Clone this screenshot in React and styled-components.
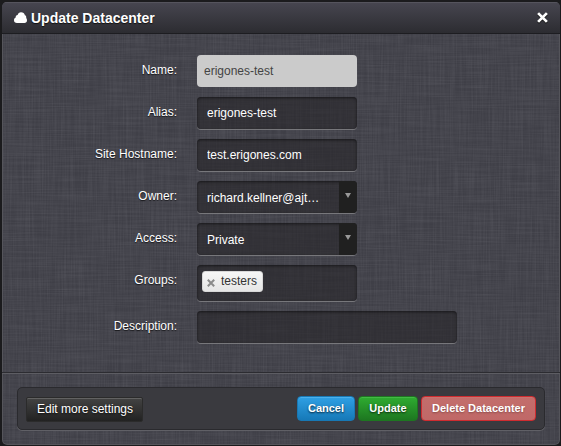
import React from 'react';
import styled, { createGlobalStyle, css } from 'styled-components';

const weave = (frequency, seed) =>
  `url("data:image/svg+xml,${encodeURIComponent(
    `<svg xmlns='http://www.w3.org/2000/svg' width='560' height='446'><filter id='f' x='0' y='0' width='100%' height='100%' color-interpolation-filters='sRGB'><feTurbulence type='fractalNoise' baseFrequency='${frequency}' numOctaves='2' seed='${seed}'/><feColorMatrix values='0 0 0 0 0.55  0 0 0 0 0.55  0 0 0 0 0.58  0.24 0 0 0 -0.08'/></filter><rect width='560' height='446' filter='url(#f)'/></svg>`
  )}")`;

const GlobalStyle = createGlobalStyle`
  * { box-sizing: border-box; }
  body {
    margin: 0;
    overflow: hidden;
    background: #1b1b1d;
    font-family: "Liberation Sans", Arial, sans-serif;
    font-size: 12px;
    color: #fff;
  }
  button, input { font-family: inherit; }
`;

const Page = styled.div`
  height: 446px;
  padding: 2px 1px 1px 2px;
`;

const Dialog = styled.section`
  display: flex;
  flex-direction: column;
  height: 443px;
  border-radius: 5px;
  overflow: hidden;
  background: ${weave('0.7 0.02', 3)}, ${weave('0.02 0.7', 8)}, #3f3f47;
  box-shadow: inset 1px 0 #55555b, inset -1px 0 #55555b, inset 0 -1px #55555b;
`;

const Header = styled.header`
  display: flex;
  align-items: center;
  height: 32px;
  padding: 0 12px 0 12px;
  background: linear-gradient(#474650, #2c2c31);
  border-bottom: 1px solid #1d1d21;
  box-shadow: inset 0 1px #55545d;
  flex: none;
`;

const Title = styled.h1`
  flex: 1;
  margin: 0 0 0 4px;
  font-size: 14px;
  line-height: 20px;
  font-weight: bold;
  text-shadow: 0 1px 1px #111;
`;

const CloseButton = styled.button`
  display: flex;
  margin-top: -1px;
  padding: 0;
  border: 0;
  background: none;
  filter: drop-shadow(0 1px 0 #111);
`;

const Form = styled.form`
  display: flex;
  flex-direction: column;
  gap: 10px;
  height: 338px;
  padding: 21px 0 0;
  flex: none;
`;

const Row = styled.div`
  display: grid;
  grid-template-columns: 175px auto;
  column-gap: 20px;
  justify-content: start;
`;

const Label = styled.label`
  padding-top: 7px;
  line-height: 16px;
  text-align: right;
  text-shadow: 0 1px 1px #17171a;
`;

const field = css`
  width: ${p => p.$width || 160}px;
  height: ${p => p.$height || 32}px;
  border: 0;
  border-radius: 4px;
  background: rgba(36, 35, 39, 0.55);
  box-shadow: inset 0 1px 3px rgba(0, 0, 0, 0.55), 0 1px 0 #77777b;
  color: #fff;
  font-size: 12px;
`;

const TextInput = styled.input`
  ${field}
  display: block;
  padding: 0 10px;
  outline: 0;
  &:disabled {
    padding: 0 7px;
    background: #cbcbcb;
    box-shadow: none;
    color: #444;
  }
`;

const Select = styled.div`
  ${field}
  display: flex;
  overflow: hidden;
`;

const SelectValue = styled.span`
  flex: 1;
  padding-left: 10px;
  line-height: 34px;
  white-space: nowrap;
`;

const SelectArrow = styled.span`
  display: flex;
  justify-content: center;
  width: 18px;
  padding-top: 12px;
  background: #202020;
`;

const TagField = styled.div`
  ${field}
  padding: 6px 5px;
`;

const Tag = styled.span`
  display: inline-flex;
  align-items: center;
  width: 61px;
  height: 21px;
  padding: 0 6px 1px 4px;
  border: 1px solid #d8d8d8;
  border-radius: 3px;
  background: linear-gradient(#f6f6f6, #e6e6e6);
  color: #333;
  gap: 6px;
  svg { margin-top: 4px; flex: none; }
`;

const Footer = styled.footer`
  flex: 1;
  padding: 14px 14px 13px 15px;
  border-top: 1px solid #2c2c31;
  box-shadow: inset 0 1px #5d5d63;
`;

const ActionBar = styled.div`
  display: flex;
  align-items: flex-start;
  gap: 3px;
  width: 528px;
  height: 43px;
  padding: 8px;
  border: 1px solid #2a2a2e;
  border-radius: 5px;
  background: #3a3a3f;
  box-shadow: 0 1px #606066;
`;

const tones = {
  dark: ['#434343', '#222', '#2b2b2b', '#626262'],
  blue: ['#2fa0e4', '#1679b8', '#1878b4', '#4bb0eb'],
  green: ['#2fac31', '#1d7720', '#1e7621', '#43b945'],
  red: ['#c36e6c', '#c06867', '#cf2c30', '#c97370'],
};

const Button = styled.button`
  width: ${p => p.$width}px;
  height: 25px;
  padding: 0 0 1px;
  border: 1px solid ${p => tones[p.$tone][2]};
  border-radius: ${p => (p.$tone === 'dark' ? 2 : 4)}px;
  background: linear-gradient(${p => tones[p.$tone][0]}, ${p => tones[p.$tone][1]});
  box-shadow: inset 0 1px ${p => tones[p.$tone][3]};
  color: #fff;
  font-size: 11px;
  font-weight: bold;
  white-space: nowrap;
  text-shadow: 0 1px 2px rgba(0, 0, 0, ${p => (p.$tone === 'red' ? 0.3 : 0.75)});
  ${p => p.$tone === 'dark' && css`
    margin: 1px auto 0 0;
    padding: 0 0 1px 1px;
    font-size: 12px;
    font-weight: normal;
  `}
`;

const CloudIcon = () => (
  <svg width="13" height="11" viewBox="0 0 13 11">
    <path fill="#fff" d="M3 11C1.1 11 0 9.9 0 8.2 0 6.9.6 6 1.7 5.6 1.6 4.1 2.3 3.2 3.6 3 4.2 1.2 5.3.3 7 .3c2.1 0 3.5 1.1 3.9 3 1.1.3 1.6 1.4 1.3 2.6.6.5.8 1.3.8 2.3 0 1.7-1 2.8-2.6 2.8z" />
  </svg>
);

const Cross = ({ size, color }) => (
  <svg width={size} height={size} viewBox="0 0 10 10">
    <path d="M1 1l8 8M9 1L1 9" stroke={color} strokeWidth="2.5" fill="none" />
  </svg>
);

const Dropdown = ({ value }) => (
  <Select>
    <SelectValue>{value}</SelectValue>
    <SelectArrow>
      <svg width="6" height="5" viewBox="0 0 6 5"><path d="M0 0h6L3 5z" fill="#999" /></svg>
    </SelectArrow>
  </Select>
);

const Field = ({ label, children }) => (
  <Row>
    <Label>{label}:</Label>
    {children}
  </Row>
);

export default function App() {
  return (
    <>
      <GlobalStyle />
      <Page>
        <Dialog>
          <Header>
            <CloudIcon />
            <Title>Update Datacenter</Title>
            <CloseButton aria-label="Close"><Cross size={11} color="#fff" /></CloseButton>
          </Header>
          <Form>
            <Field label="Name"><TextInput disabled defaultValue="erigones-test" /></Field>
            <Field label="Alias"><TextInput defaultValue="erigones-test" /></Field>
            <Field label="Site Hostname"><TextInput defaultValue="test.erigones.com" /></Field>
            <Field label="Owner"><Dropdown value="richard.kellner@ajt…" /></Field>
            <Field label="Access"><Dropdown value="Private" /></Field>
            <Field label="Groups">
              <TagField $height={36}>
                <Tag><Cross size={8} color="#8b8b8b" />testers</Tag>
              </TagField>
            </Field>
            <Field label="Description"><TextInput $width={260} /></Field>
          </Form>
          <Footer>
            <ActionBar>
              <Button $tone="dark" $width={117}>Edit more settings</Button>
              <Button $tone="blue" $width={58}>Cancel</Button>
              <Button $tone="green" $width={60}>Update</Button>
              <Button $tone="red" $width={115}>Delete Datacenter</Button>
            </ActionBar>
          </Footer>
        </Dialog>
      </Page>
    </>
  );
}
